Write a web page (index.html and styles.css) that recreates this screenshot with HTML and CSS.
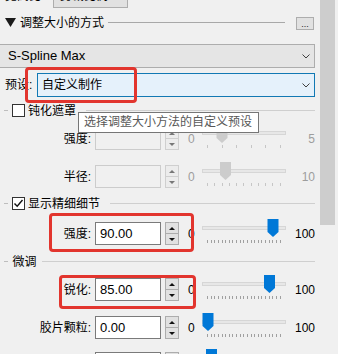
FILE: index.html
```html
<!DOCTYPE html>
<html>
<head>
<meta charset="utf-8">
<link rel="stylesheet" href="styles.css">
</head>
<body>
<div class="window">
  <div class="content">
    <div class="aspect">
      <span class="aspect-label">宽高比:</span>
      <div class="combo-small"><span>剪裁比例</span><svg class="chev" width="8" height="5" viewBox="0 0 8 5"><polyline points="0.5,0.5 4,4 7.5,0.5" /></svg></div>
    </div>

    <div class="section-head">
      <svg class="tri" width="11" height="9" viewBox="0 0 11 9"><polygon points="0,0 11,0 5.5,9" /></svg>
      <span class="section-title">调整大小的方式</span>
      <div class="section-line"></div>
      <div class="dots">...</div>
    </div>

    <div class="combo method"><span>S-Spline Max</span><svg class="chev" width="8" height="5" viewBox="0 0 8 5"><polyline points="0.5,0.5 4,4 7.5,0.5" /></svg></div>

    <div class="preset">
      <span class="preset-label">预设:</span>
      <div class="combo focus"><span>自定义制作</span><svg class="chev" width="8" height="5" viewBox="0 0 8 5"><polyline points="0.5,0.5 4,4 7.5,0.5" /></svg></div>
    </div>

    <div class="legend l1">
      <div class="dash"></div>
      <div class="checkbox"></div>
      <span>钝化遮罩</span>
      <div class="legend-line wide"></div>
    </div>

    <div class="frow r1">
      <span class="flabel">强度:</span>
      <div class="field disabled"></div>
      <div class="spin disabled"><span><i class="up"></i></span><span><i class="down"></i></span></div>
      <span class="minv dim">0</span>
      <svg class="slider" width="92" height="28" viewBox="0 0 92 28">
        <rect class="track" x="4.5" y="8.5" width="83" height="3" />
        <path class="ticks dis" d="M9.5 22v3M24.5 22v3M38.5 22v3M53.5 22v3M67.5 22v3M82.5 22v3" />
        <path class="thumb-d" d="M18.5 2h11v13l-5.5 5l-5.5 -5z" />
      </svg>
      <span class="maxv dim">5</span>
    </div>

    <div class="frow r2">
      <span class="flabel">半径:</span>
      <div class="field disabled"></div>
      <div class="spin disabled"><span><i class="up"></i></span><span><i class="down"></i></span></div>
      <span class="minv dim">0</span>
      <svg class="slider" width="92" height="28" viewBox="0 0 92 28">
        <rect class="track" x="4.5" y="8.5" width="83" height="3" />
        <path class="ticks dis" d="M9.5 22v3M16.5 22v3M24.5 22v3M31.5 22v3M38.5 22v3M45.5 22v3M53.5 22v3M60.5 22v3M67.5 22v3M74.5 22v3M82.5 22v3" />
        <path class="thumb-d" d="M22 1h11v13l-5.5 5l-5.5 -5z" />
      </svg>
      <span class="maxv dim">10</span>
    </div>

    <div class="legend l2">
      <div class="dash"></div>
      <div class="checkbox"><svg width="11" height="11" viewBox="0 0 11 11"><polyline points="1.5,5.5 4.2,8.3 9.5,2" /></svg></div>
      <span>显示精细细节</span>
      <div class="legend-line wide"></div>
    </div>

    <div class="frow r3">
      <span class="flabel">强度:</span>
      <div class="field">90.00</div>
      <div class="spin"><span><i class="up"></i></span><span><i class="down"></i></span></div>
      <span class="minv">0</span>
      <svg class="slider" width="92" height="28" viewBox="0 0 92 28">
        <rect class="track" x="4.5" y="8.5" width="83" height="3" />
        <path class="ticks" d="M9.5 22v3M13.5 22v3M16.5 22v3M20.5 22v3M24.5 22v3M27.5 22v3M31.5 22v3M34.5 22v3M38.5 22v3M42.5 22v3M45.5 22v3M49.5 22v3M53.5 22v3M56.5 22v3M60.5 22v3M63.5 22v3M67.5 22v3M71.5 22v3M74.5 22v3M78.5 22v3M82.5 22v3" />
        <path class="thumb" d="M69.5 1h11v13l-5.5 5l-5.5 -5z" />
      </svg>
      <span class="maxv">100</span>
    </div>

    <div class="legend l3">
      <div class="dash"></div>
      <span class="plain">微调</span>
      <div class="legend-line"></div>
    </div>

    <div class="frow r4">
      <span class="flabel">锐化:</span>
      <div class="field">85.00</div>
      <div class="spin"><span><i class="up"></i></span><span><i class="down"></i></span></div>
      <span class="minv">0</span>
      <svg class="slider" width="92" height="28" viewBox="0 0 92 28">
        <rect class="track" x="4.5" y="8.5" width="83" height="3" />
        <path class="ticks" d="M9.5 22v3M13.5 22v3M16.5 22v3M20.5 22v3M24.5 22v3M27.5 22v3M31.5 22v3M34.5 22v3M38.5 22v3M42.5 22v3M45.5 22v3M49.5 22v3M53.5 22v3M56.5 22v3M60.5 22v3M63.5 22v3M67.5 22v3M71.5 22v3M74.5 22v3M78.5 22v3M82.5 22v3" />
        <path class="thumb" d="M66 1h11v13l-5.5 5l-5.5 -5z" />
      </svg>
      <span class="maxv">100</span>
    </div>

    <div class="frow r5">
      <span class="flabel">胶片颗粒:</span>
      <div class="field">0.00</div>
      <div class="spin"><span><i class="up"></i></span><span><i class="down"></i></span></div>
      <span class="minv">0</span>
      <svg class="slider" width="92" height="28" viewBox="0 0 92 28">
        <rect class="track" x="4.5" y="8.5" width="83" height="3" />
        <path class="ticks" d="M9.5 22v3M13.5 22v3M16.5 22v3M20.5 22v3M24.5 22v3M27.5 22v3M31.5 22v3M34.5 22v3M38.5 22v3M42.5 22v3M45.5 22v3M49.5 22v3M53.5 22v3M56.5 22v3M60.5 22v3M63.5 22v3M67.5 22v3M71.5 22v3M74.5 22v3M78.5 22v3M82.5 22v3" />
        <path class="thumb" d="M4.5 1h11v13l-5.5 5l-5.5 -5z" />
      </svg>
      <span class="maxv">100</span>
    </div>

    <div class="frow r6">
      <span class="flabel"></span>
      <div class="field"></div>
      <div class="spin"><span><i class="up"></i></span><span><i class="down"></i></span></div>
      <span class="minv"></span>
      <svg class="slider" width="92" height="28" viewBox="0 0 92 28">
        <rect class="track" x="4.5" y="8.5" width="83" height="3" />
        <path class="thumb" d="M8 1h11v13l-5.5 5l-5.5 -5z" />
      </svg>
      <span class="maxv"></span>
    </div>
  </div>
  <div class="scrollbar"><div class="sthumb"></div></div>

  <div class="tooltip">选择调整大小方法的自定义预设</div>
  <div class="hl h1"></div>
  <div class="hl h2"></div>
  <div class="hl h3"></div>
</div>
</body>
</html>
```

FILE: styles.css
```css
* { box-sizing: border-box; }
html, body { margin: 0; padding: 0; }
body {
  background: #f0f0f0;
  font-family: "Liberation Sans", "Noto Sans CJK SC", sans-serif;
  font-size: 12px;
  line-height: 16px;
  color: #000;
  overflow: hidden;
}
.window {
  position: relative;
  display: flex;
  width: 338px;
  height: 354px;
  overflow: hidden;
}
.content { width: 320px; flex: none; }
.scrollbar { width: 18px; flex: none; background: #f0f0f0; }
.sthumb { width: 15px; height: 225px; background: #cdcdcd; }

.chev { fill: none; stroke: #404040; stroke-width: 1; flex: none; }

.aspect {
  display: flex; align-items: center;
  height: 24px; margin-top: -16px; padding-left: 5px;
}
.aspect-label { width: 48px; flex: none; }
.combo-small {
  width: 75px; height: 24px;
  border: 1px solid #adadad; background: #e1e1e1;
  display: flex; align-items: center; justify-content: space-between;
  padding: 0 5px 0 6px;
}

.section-head {
  display: flex; align-items: center;
  height: 17px; margin-top: 6px; padding: 0 6px 0 5px;
}
.tri { fill: #1a1a1a; margin-right: 4px; flex: none; }
.section-title { flex: none; }
.section-line { flex: 1; height: 1px; background: #a8a8a8; margin: 0 11px 0 4px; }
.dots {
  width: 18px; height: 13px; flex: none;
  border: 1px solid #adadad; background: #e1e1e1;
  font-size: 9px; line-height: 12px; text-align: center; color: #222;
  margin-top: 2px;
}

.combo {
  height: 24px;
  border: 1px solid #adadad; background: #e5e5e5;
  display: flex; align-items: center; justify-content: space-between;
}
.method {
  margin: 13px 5px 0 -1px;
  padding: 0 4px 0 8px;
  font-size: 13px;
}
.preset {
  display: flex; align-items: center;
  height: 24px; margin-top: 5px; padding: 0 5px 0 5px;
}
.preset-label { width: 32px; flex: none; }
.focus {
  flex: 1;
  background: #e5f1fb; border-color: #1279b4;
  padding: 0 4px 0 4px;
}

.legend { display: flex; align-items: center; height: 15px; }
.l1 { margin-top: 6px; }
.l2 { margin-top: 8px; }
.l3 { margin-top: 9px; }
.dash { width: 4px; height: 1px; background: #bdbdbd; margin: 0 4px 0 4px; flex: none; }
.checkbox {
  width: 13px; height: 13px; flex: none;
  border: 1px solid #333; background: #fff; margin-right: 3px;
  display: flex; align-items: center; justify-content: center;
}
.checkbox svg { fill: none; stroke: #111; stroke-width: 1.4; }
.plain { margin-left: 0.5px; }
.legend-line { flex: 1; height: 1px; background: #cfcfcf; margin: 0 5px 0 5px; }
.legend-line.wide { margin-left: 10px; }

.frow { display: flex; align-items: center; height: 23px; }
.r1 { margin-top: 9px; }
.r2 { margin-top: 15px; }
.r3 { margin-top: 11px; }
.r4 { margin-top: 9px; }
.r5 { margin-top: 15px; }
.r6 { margin-top: 13px; }
.flabel { width: 91px; flex: none; text-align: right; }
.field {
  width: 66px; height: 23px; flex: none; margin-left: 4px;
  border: 1px solid #7a7a7a; background: #fff;
  padding-left: 4px; font-size: 13px;
  display: flex; align-items: center;
}
.field.disabled { border-color: #cccccc; background: #f0f0f0; }
.spin {
  width: 14px; height: 23px; flex: none; margin-left: 4px;
  display: flex; flex-direction: column;
}
.spin span {
  flex: 1;
  border: 1px solid #adadad; background: #e1e1e1;
  display: flex; align-items: center; justify-content: center;
}
.spin span + span { border-top: none; }
.spin.disabled span { border-color: #cfcfcf; background: #ececec; }
.up, .down { width: 0; height: 0; border-left: 3px solid transparent; border-right: 3px solid transparent; }
.up { border-bottom: 3px solid #111; }
.down { border-top: 3px solid #111; }
.spin.disabled .up { border-bottom-color: #777; }
.spin.disabled .down { border-top-color: #777; }
.minv { width: 10px; flex: none; margin-left: 9px; }
.dim { color: #9d9d9d; }
.slider { flex: none; align-self: flex-start; margin-top: -4px; }
.track { fill: #e7e7e7; stroke: #d6d6d6; stroke-width: 1; }
.ticks { stroke: #a0a0a0; stroke-width: 1; fill: none; }
.ticks.dis { stroke: #c6c6c6; }
.thumb { fill: #0078d7; }
.thumb-d { fill: #cccccc; }
.maxv { width: 25px; flex: none; text-align: right; }

.tooltip {
  position: absolute; left: 78px; top: 112px;
  width: 181px; height: 21px;
  border: 1px solid #767676; background: #fff; color: #575757;
  padding-left: 5px; line-height: 19px; white-space: nowrap;
}
.hl { position: absolute; border: 3px solid #e2352e; border-radius: 4px; }
.h1 { left: 25px; top: 67px; width: 112px; height: 36px; }
.h2 { left: 49px; top: 213px; width: 145px; height: 39px; }
.h3 { left: 59px; top: 275px; width: 137px; height: 34px; }
```
